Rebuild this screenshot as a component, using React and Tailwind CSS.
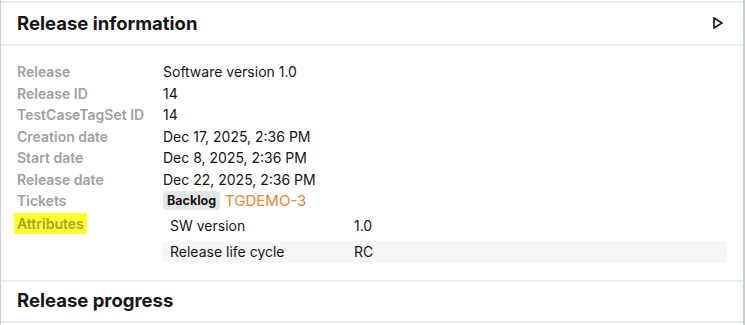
import React from "react";

const ROWS = [
  ["Release", "Software version 1.0"],
  ["Release ID", "14"],
  ["TestCaseTagSet ID", "14"],
  ["Creation date", "Dec 17, 2025, 2:36 PM"],
  ["Start date", "Dec 8, 2025, 2:36 PM"],
  ["Release date", "Dec 22, 2025, 2:36 PM"],
];

const ATTRS = [
  ["SW version", "1.0"],
  ["Release life cycle", "RC"],
];

const Label = ({ children }) => (
  <div className="w-[146px] shrink-0 text-[#a0a0a0] font-semibold">{children}</div>
);

const App = () => {
  return (
    <div
      className="w-[745px] h-[325px] bg-white overflow-hidden text-[#151515]"
      style={{ fontFamily: "Inter, 'Noto Sans', sans-serif" }}
    >
      <div className="h-[325px] border-l border-r-2 border-l-[#c9cfcf] border-r-[#c9cfcf] pt-px">
        {/* RELEASE INFORMATION */}
        <div className="border-t-2 border-[#e8eded]">
          <div className="h-[43px] flex items-center justify-between pl-[16px] pr-[20px] border-b-2 border-[#e8eded]">
            <h2 className="text-[18.5px] font-bold">Release information</h2>
            <svg width="10" height="12" viewBox="0 0 10 12" className="mt-[-2px]">
              <path d="M1 1 L9 6 L1 11 Z" fill="none" stroke="#151515" strokeWidth="1.6" strokeLinejoin="miter" />
            </svg>
          </div>

          <div className="pl-[16px] pr-[16px] pt-[15px] pb-[16px] text-[14px] leading-[21.5px]">
            {ROWS.map(([k, v]) => (
              <div key={k} className="flex">
                <Label>{k}</Label>
                <div>{v}</div>
              </div>
            ))}

            <div className="flex h-[21.5px] items-center">
              <Label>Tickets</Label>
              <div className="flex items-center gap-[5px]">
                <span className="bg-[#e4e7e7] rounded-[4px] px-[4px] h-[19px] flex items-center text-[12.5px] font-bold leading-none">
                  Backlog
                </span>
                <span className="text-[#f0812f] text-[15px]">TGDEMO-3</span>
              </div>
            </div>

            <div className="flex">
              <div className="w-[146px] shrink-0 pt-[1px]">
                <span className="bg-[#ffff2e] text-[#a3a33a] font-semibold px-[3px] -ml-[3px] inline-block leading-[21px]">
                  Attributes
                </span>
              </div>
              <div className="flex-1 flex flex-col gap-[4px] pt-[3px]">
                {ATTRS.map(([k, v], i) => (
                  <div
                    key={k}
                    className={
                      "flex h-[22px] items-center rounded-[4px] pl-[7px] " +
                      (i % 2 === 1 ? "bg-[#f6f6f6]" : "")
                    }
                  >
                    <div className="w-[184px]">{k}</div>
                    <div>{v}</div>
                  </div>
                ))}
              </div>
            </div>
          </div>
        </div>

        {/* RELEASE PROGRESS */}
        <div className="border-t-2 border-[#e8eded] mt-[1px]">
          <div className="h-[41px] flex items-center pl-[16px] border-b-2 border-[#e8eded]">
            <h2 className="text-[18.5px] font-bold">Release progress</h2>
          </div>
        </div>
      </div>
    </div>
  );
};

export default App;
